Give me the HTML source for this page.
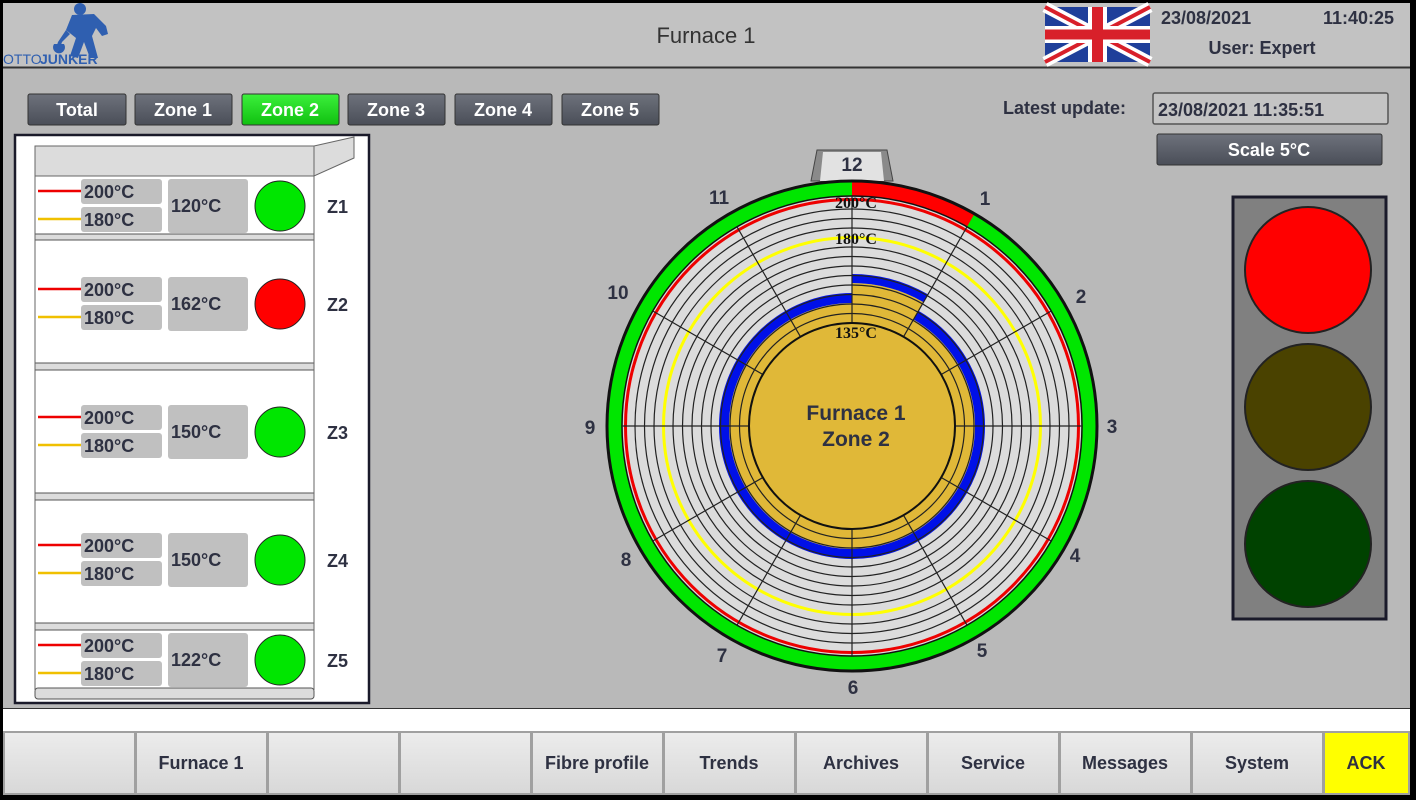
<!DOCTYPE html>
<html><head><meta charset="utf-8"><style>
html,body{margin:0;padding:0;background:#000;}
svg{display:block}
text{font-family:"Liberation Sans",sans-serif;font-weight:bold;fill:#2e3142}
</style></head><body>
<svg width="1416" height="800" viewBox="0 0 1416 800" xmlns="http://www.w3.org/2000/svg">
<defs>
<linearGradient id="btn" x1="0" y1="0" x2="0" y2="1"><stop offset="0" stop-color="#6e727c"/><stop offset="1" stop-color="#4a4e58"/></linearGradient>
<linearGradient id="gbtn" x1="0" y1="0" x2="0" y2="1"><stop offset="0" stop-color="#3cf03c"/><stop offset="1" stop-color="#10c010"/></linearGradient>
<linearGradient id="bb" x1="0" y1="0" x2="0" y2="1"><stop offset="0" stop-color="#ececec"/><stop offset="1" stop-color="#d8d8d8"/></linearGradient>
</defs>
<rect x="0" y="0" width="1416" height="800" fill="#000"/>
<rect x="3" y="3" width="1407" height="705" fill="#b9b9b9"/>
<rect x="3" y="3" width="1407" height="64" fill="#c2c2c2"/>
<line x1="3" y1="67.5" x2="1410" y2="67.5" stroke="#333" stroke-width="2"/>
<!-- logo -->
<g fill="#2f5fb0">
<circle cx="80" cy="9" r="6"/>
<path d="M72 15 L94 14 L106 26 L108 34 L102 36 L96 28 L92 36 L98 58 L90 58 L84 42 L78 58 L70 56 L76 38 L66 30 Z"/>
<path d="M66 30 L58 42 L56 48 L60 48 L62 42 L70 34 Z"/>
<path d="M54 44 a6 6 0 1 0 10 0 Z"/>
</g>
<text x="3" y="64" font-size="14" style="fill:#2f5fb0;font-weight:normal">OTTO</text>
<text x="40" y="64" font-size="14" style="fill:#2f5fb0">JUNKER</text>
<text x="706" y="43" font-size="22" text-anchor="middle" style="font-weight:normal;fill:#333">Furnace 1</text>
<!-- flag -->
<g>
<rect x="1045" y="7" width="105" height="55" fill="#1f3f9a"/>
<path d="M1045 7 L1150 62 M1150 7 L1045 62" stroke="#fff" stroke-width="11"/>
<path d="M1045 7 L1150 62 M1150 7 L1045 62" stroke="#d8202a" stroke-width="4"/>
<rect x="1088" y="7" width="19" height="55" fill="#fff"/>
<rect x="1045" y="26" width="105" height="17" fill="#fff"/>
<rect x="1092" y="7" width="11" height="55" fill="#d8202a"/>
<rect x="1045" y="29.5" width="105" height="10" fill="#d8202a"/>
</g>
<text x="1161" y="24" font-size="18">23/08/2021</text>
<text x="1394" y="24" font-size="18" text-anchor="end">11:40:25</text>
<text x="1262" y="54" font-size="18" text-anchor="middle">User: Expert</text>
<!-- zone buttons -->
<g font-size="18" text-anchor="middle">
<rect x="28" y="94" width="98" height="31" rx="2" fill="url(#btn)" stroke="#333"/><text x="77" y="116" style="fill:#fff">Total</text>
<rect x="135" y="94" width="97" height="31" rx="2" fill="url(#btn)" stroke="#333"/><text x="183" y="116" style="fill:#fff">Zone 1</text>
<rect x="242" y="94" width="97" height="31" rx="2" fill="url(#gbtn)" stroke="#333"/><text x="290" y="116" style="fill:#fff">Zone 2</text>
<rect x="348" y="94" width="97" height="31" rx="2" fill="url(#btn)" stroke="#333"/><text x="396" y="116" style="fill:#fff">Zone 3</text>
<rect x="455" y="94" width="97" height="31" rx="2" fill="url(#btn)" stroke="#333"/><text x="503" y="116" style="fill:#fff">Zone 4</text>
<rect x="562" y="94" width="97" height="31" rx="2" fill="url(#btn)" stroke="#333"/><text x="610" y="116" style="fill:#fff">Zone 5</text>
</g>
<text x="1003" y="114" font-size="18">Latest update:</text>
<rect x="1153" y="93" width="235" height="31" rx="2" fill="#c4c4c4" stroke="#555" stroke-width="1.5"/>
<text x="1158" y="116" font-size="18">23/08/2021 11:35:51</text>
<rect x="1157" y="134" width="225" height="31" rx="2" fill="url(#btn)" stroke="#333"/>
<text x="1269" y="156" font-size="18" text-anchor="middle" style="fill:#fff">Scale 5°C</text>
<!-- traffic light -->
<rect x="1233" y="197" width="153" height="422" fill="#808080" stroke="#1a1a2a" stroke-width="3"/>
<circle cx="1308" cy="270" r="63" fill="#ff0000" stroke="#222" stroke-width="2"/>
<circle cx="1308" cy="407" r="63" fill="#4a4200" stroke="#222" stroke-width="2"/>
<circle cx="1308" cy="544" r="63" fill="#004200" stroke="#222" stroke-width="2"/>
<!-- left panel -->
<rect x="15" y="135" width="354" height="568" fill="#fff" stroke="#1a1a2a" stroke-width="2.5"/>
<rect x="35" y="146" width="279" height="30" fill="#dcdcdc" stroke="#666"/>
<polygon points="314,146 354,137 354,158 314,176" fill="#dcdcdc" stroke="#666"/>
<g fill="#dcdcdc" stroke="#555">
<rect x="35" y="234" width="279" height="6"/>
<rect x="35" y="363" width="279" height="7"/>
<rect x="35" y="493" width="279" height="7"/>
<rect x="35" y="623" width="279" height="7"/>
<rect x="35" y="688" width="279" height="11" rx="3"/>
</g>
<line x1="35" y1="176" x2="35" y2="690" stroke="#666"/>
<line x1="314" y1="176" x2="314" y2="690" stroke="#666"/>
<g font-size="18">
<g transform="translate(0,179)">
<line x1="38" y1="12" x2="81" y2="12" stroke="#e00" stroke-width="2.5"/><line x1="38" y1="40" x2="81" y2="40" stroke="#f0c000" stroke-width="2.5"/>
<rect x="81" y="0" width="81" height="25" rx="3" fill="#c0c0c0"/><rect x="81" y="28" width="81" height="25" rx="3" fill="#c0c0c0"/>
<rect x="168" y="0" width="80" height="54" rx="3" fill="#c0c0c0"/>
<text x="84" y="19">200°C</text><text x="84" y="47">180°C</text><text x="171" y="33">120°C</text>
<circle cx="280" cy="27" r="25" fill="#00e600" stroke="#222"/><text x="327" y="34">Z1</text></g>
<g transform="translate(0,277)">
<line x1="38" y1="12" x2="81" y2="12" stroke="#e00" stroke-width="2.5"/><line x1="38" y1="40" x2="81" y2="40" stroke="#f0c000" stroke-width="2.5"/>
<rect x="81" y="0" width="81" height="25" rx="3" fill="#c0c0c0"/><rect x="81" y="28" width="81" height="25" rx="3" fill="#c0c0c0"/>
<rect x="168" y="0" width="80" height="54" rx="3" fill="#c0c0c0"/>
<text x="84" y="19">200°C</text><text x="84" y="47">180°C</text><text x="171" y="33">162°C</text>
<circle cx="280" cy="27" r="25" fill="#ff0000" stroke="#222"/><text x="327" y="34">Z2</text></g>
<g transform="translate(0,405)">
<line x1="38" y1="12" x2="81" y2="12" stroke="#e00" stroke-width="2.5"/><line x1="38" y1="40" x2="81" y2="40" stroke="#f0c000" stroke-width="2.5"/>
<rect x="81" y="0" width="81" height="25" rx="3" fill="#c0c0c0"/><rect x="81" y="28" width="81" height="25" rx="3" fill="#c0c0c0"/>
<rect x="168" y="0" width="80" height="54" rx="3" fill="#c0c0c0"/>
<text x="84" y="19">200°C</text><text x="84" y="47">180°C</text><text x="171" y="33">150°C</text>
<circle cx="280" cy="27" r="25" fill="#00e600" stroke="#222"/><text x="327" y="34">Z3</text></g>
<g transform="translate(0,533)">
<line x1="38" y1="12" x2="81" y2="12" stroke="#e00" stroke-width="2.5"/><line x1="38" y1="40" x2="81" y2="40" stroke="#f0c000" stroke-width="2.5"/>
<rect x="81" y="0" width="81" height="25" rx="3" fill="#c0c0c0"/><rect x="81" y="28" width="81" height="25" rx="3" fill="#c0c0c0"/>
<rect x="168" y="0" width="80" height="54" rx="3" fill="#c0c0c0"/>
<text x="84" y="19">200°C</text><text x="84" y="47">180°C</text><text x="171" y="33">150°C</text>
<circle cx="280" cy="27" r="25" fill="#00e600" stroke="#222"/><text x="327" y="34">Z4</text></g>
<g transform="translate(0,633)">
<line x1="38" y1="12" x2="81" y2="12" stroke="#e00" stroke-width="2.5"/><line x1="38" y1="40" x2="81" y2="40" stroke="#f0c000" stroke-width="2.5"/>
<rect x="81" y="0" width="81" height="25" rx="3" fill="#c0c0c0"/><rect x="81" y="28" width="81" height="25" rx="3" fill="#c0c0c0"/>
<rect x="168" y="0" width="80" height="54" rx="3" fill="#c0c0c0"/>
<text x="84" y="19">200°C</text><text x="84" y="47">180°C</text><text x="171" y="33">122°C</text>
<circle cx="280" cy="27" r="25" fill="#00e600" stroke="#222"/><text x="327" y="34">Z5</text></g>
</g>
<!-- polar chart -->
<polygon points="817,150 887,150 893,181 811,181" fill="#8a8a8a" stroke="#444"/>
<polygon points="823,152 881,152 884,181 820,181" fill="#e2e2e2"/>
<circle cx="852" cy="426" r="230" fill="#dcdcdc"/>
<circle cx="852" cy="426" r="237.5" fill="none" stroke="#00e600" stroke-width="15"/>
<path d="M852 188.5 A237.5 237.5 0 0 1 970.75 220.3" fill="none" stroke="#ff0000" stroke-width="15"/>
<circle cx="852" cy="426" r="245" fill="none" stroke="#111" stroke-width="3"/>
<circle cx="852" cy="426" r="230" fill="none" stroke="#111" stroke-width="1.5"/>
<circle cx="852" cy="426" r="123" fill="#e0b838"/>
<circle cx="852" cy="426" r="128" fill="none" stroke="#0010e8" stroke-width="10"/>
<path d="M852 426 L852 283 A143 143 0 0 1 923.5 302.2 Z" fill="#e0b838"/>
<path d="M852 278.5 A147.5 147.5 0 0 1 925.75 298.3" fill="none" stroke="#0010e8" stroke-width="9"/>
<g fill="none" stroke="#222" stroke-width="1.2">
<circle cx="852" cy="426" r="112.5"/><circle cx="852" cy="426" r="122"/><circle cx="852" cy="426" r="131.5"/><circle cx="852" cy="426" r="141"/><circle cx="852" cy="426" r="150.5"/><circle cx="852" cy="426" r="160"/><circle cx="852" cy="426" r="169.5"/><circle cx="852" cy="426" r="179"/><circle cx="852" cy="426" r="188.5"/><circle cx="852" cy="426" r="198"/><circle cx="852" cy="426" r="207.5"/><circle cx="852" cy="426" r="217"/>
</g>
<circle cx="852" cy="426" r="188.5" fill="none" stroke="#ffff00" stroke-width="3"/>
<circle cx="852" cy="426" r="226.5" fill="none" stroke="#ee0000" stroke-width="3"/>
<g stroke="#222" stroke-width="1.2">
<line x1="852" y1="323" x2="852" y2="196"/><line x1="903.5" y1="336.8" x2="967" y2="226.8"/><line x1="941.2" y1="374.5" x2="1051.2" y2="311"/><line x1="955" y1="426" x2="1082" y2="426"/><line x1="941.2" y1="477.5" x2="1051.2" y2="541"/><line x1="903.5" y1="515.2" x2="967" y2="625.2"/><line x1="852" y1="529" x2="852" y2="656"/><line x1="800.5" y1="515.2" x2="737" y2="625.2"/><line x1="762.8" y1="477.5" x2="652.8" y2="541"/><line x1="749" y1="426" x2="622" y2="426"/><line x1="762.8" y1="374.5" x2="652.8" y2="311"/><line x1="800.5" y1="336.8" x2="737" y2="226.8"/>
</g>
<circle cx="852" cy="426" r="103" fill="#e0b838" stroke="#111" stroke-width="2"/>
<g font-size="16" text-anchor="middle">
<text x="856" y="208" style="font-family:'Liberation Serif',serif;fill:#111">200°C</text>
<text x="856" y="244" style="font-family:'Liberation Serif',serif;fill:#111">180°C</text>
<text x="856" y="338" style="font-family:'Liberation Serif',serif;fill:#111">135°C</text>
</g>
<text x="856" y="420" font-size="21" text-anchor="middle">Furnace 1</text>
<text x="856" y="446" font-size="21" text-anchor="middle">Zone 2</text>
<g font-size="19" text-anchor="middle">
<text x="852" y="171">12</text><text x="985" y="205">1</text><text x="1081" y="303">2</text><text x="1112" y="433">3</text><text x="1075" y="562">4</text><text x="982" y="657">5</text><text x="853" y="694">6</text><text x="722" y="662">7</text><text x="626" y="566">8</text><text x="590" y="434">9</text><text x="618" y="299">10</text><text x="719" y="204">11</text>
</g>
<!-- bottom -->
<rect x="3" y="709" width="1407" height="22" fill="#fff"/>
<line x1="3" y1="708.5" x2="1410" y2="708.5" stroke="#333"/>
<rect x="3" y="731" width="1407" height="64" fill="#a0a0a0"/>
<g font-size="18" text-anchor="middle">
<rect x="5" y="733" width="129" height="60" fill="url(#bb)"/>
<rect x="137" y="733" width="129" height="60" fill="url(#bb)"/><text x="201" y="769">Furnace 1</text>
<rect x="269" y="733" width="129" height="60" fill="url(#bb)"/>
<rect x="401" y="733" width="129" height="60" fill="url(#bb)"/>
<rect x="533" y="733" width="129" height="60" fill="url(#bb)"/><text x="597" y="769">Fibre profile</text>
<rect x="665" y="733" width="129" height="60" fill="url(#bb)"/><text x="729" y="769">Trends</text>
<rect x="797" y="733" width="129" height="60" fill="url(#bb)"/><text x="861" y="769">Archives</text>
<rect x="929" y="733" width="129" height="60" fill="url(#bb)"/><text x="993" y="769">Service</text>
<rect x="1061" y="733" width="129" height="60" fill="url(#bb)"/><text x="1125" y="769">Messages</text>
<rect x="1193" y="733" width="129" height="60" fill="url(#bb)"/><text x="1257" y="769">System</text>
<rect x="1325" y="733" width="83" height="60" fill="#ffff00"/><text x="1366" y="769">ACK</text>
</g>
</svg>
</body></html>
